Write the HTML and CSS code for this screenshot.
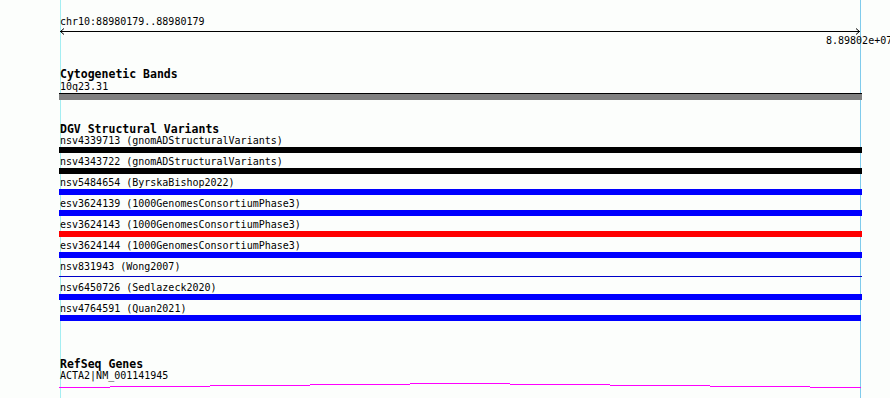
FILE: index.html
```html
<!DOCTYPE html>
<html lang="en">

<head>
    <meta charset="UTF-8">
    <title>chr10:88980179..88980179</title>
    <link rel="stylesheet" href="styles.css">
</head>

<body>
    <div class="guide guide-left"></div>
    <div class="guide guide-right"></div>

    <div class="tracks">
        <div class="locus">chr10:88980179..88980179</div>
        <svg class="ruler" width="801" height="7" viewBox="0 0 801 7">
            <path d="M0 3.5H800M4 0.5L0.5 3.5L4 6.5M796 0.5L799.5 3.5L796 6.5" fill="none" stroke="#000" stroke-width="1"/>
        </svg>
        <div class="ruler-label">8.89802e+07</div>

        <section class="track cyto">
            <h3 class="track-title">Cytogenetic Bands</h3>
            <div class="label">10q23.31</div>
            <div class="band"></div>
        </section>

        <section class="track dgv">
            <h3 class="track-title">DGV Structural Variants</h3>
            <div class="feature">
                <div class="label">nsv4339713 (gnomADStructuralVariants)</div>
                <div class="bar black"></div>
            </div>
            <div class="feature">
                <div class="label">nsv4343722 (gnomADStructuralVariants)</div>
                <div class="bar black"></div>
            </div>
            <div class="feature">
                <div class="label">nsv5484654 (ByrskaBishop2022)</div>
                <div class="bar blue"></div>
            </div>
            <div class="feature">
                <div class="label">esv3624139 (1000GenomesConsortiumPhase3)</div>
                <div class="bar blue"></div>
            </div>
            <div class="feature">
                <div class="label">esv3624143 (1000GenomesConsortiumPhase3)</div>
                <div class="bar red"></div>
            </div>
            <div class="feature">
                <div class="label">esv3624144 (1000GenomesConsortiumPhase3)</div>
                <div class="bar blue"></div>
            </div>
            <div class="feature">
                <div class="label">nsv831943 (Wong2007)</div>
                <div class="bar thin"></div>
            </div>
            <div class="feature">
                <div class="label">nsv6450726 (Sedlazeck2020)</div>
                <div class="bar blue"></div>
            </div>
            <div class="feature">
                <div class="label">nsv4764591 (Quan2021)</div>
                <div class="bar blue short"></div>
            </div>
        </section>

        <section class="track refseq">
            <h3 class="track-title">RefSeq Genes</h3>
            <div class="label">ACTA2|NM_001141945</div>
            <svg class="gene" width="803" height="8" viewBox="0 0 803 8">
                <path d="M0 5.5H51M51 4.5H151M151 3.5H251M251 2.5H351M351 1.5H451M451 2.5H551M551 3.5H651M651 4.5H751M751 5.5H802" fill="none" stroke="#ff00ff" stroke-width="1"/>
            </svg>
        </section>
    </div>
</body>
</html>
```

FILE: styles.css
```css
html, body {
    margin: 0;
    height: 100%;
    overflow: hidden;
}

body {
    background-color: #fcfefc;
    color: #000;
    font-family: "DejaVu Sans Mono", "Liberation Mono", monospace;
    font-size: 10px;
    line-height: 12px;
    position: relative;
}

/* garis bantu vertikal di tepi area tampilan */
.guide {
    position: absolute;
    top: 0;
    bottom: 0;
    width: 1px;
    z-index: 0;
}

.guide-left {
    left: 60px;
    background-color: #a4eef2;
}

.guide-right {
    left: 860px;
    background-color: #80cbec;
}

.tracks {
    position: relative;
    z-index: 1;
    margin-left: 59px;
    width: 803px;
    padding-top: 16px;
}

.locus,
.label {
    padding-left: 1px;
    white-space: nowrap;
}

.ruler {
    display: block;
    margin-left: 1px;
}

.ruler-label {
    padding-left: 767px;
    white-space: nowrap;
}

.track-title {
    margin: 0;
    padding-left: 1px;
    font-size: 11.5px;
    line-height: 13px;
    font-weight: bold;
    white-space: nowrap;
}

.cyto {
    margin-top: 21px;
}

.band {
    height: 6px;
    border-top: 1px solid #000;
    background-color: #808080;
}

.dgv {
    margin-top: 23px;
}

.dgv .track-title {
    line-height: 12px;
}

.bar {
    height: 6px;
    margin-bottom: 3px;
}

.bar.black {
    background-color: #000;
}

.bar.blue {
    background-color: #0000ff;
}

.bar.red {
    background-color: #ff0000;
}

.bar.thin {
    height: 1px;
    margin-top: 3px;
    margin-bottom: 5px;
    background-color: #0000c8;
}

.bar.short {
    margin-left: 1px;
    margin-right: 1px;
}

.refseq {
    margin-top: 37px;
}

.refseq .track-title {
    line-height: 12px;
}

.gene {
    display: block;
    shape-rendering: crispEdges;
}
```
